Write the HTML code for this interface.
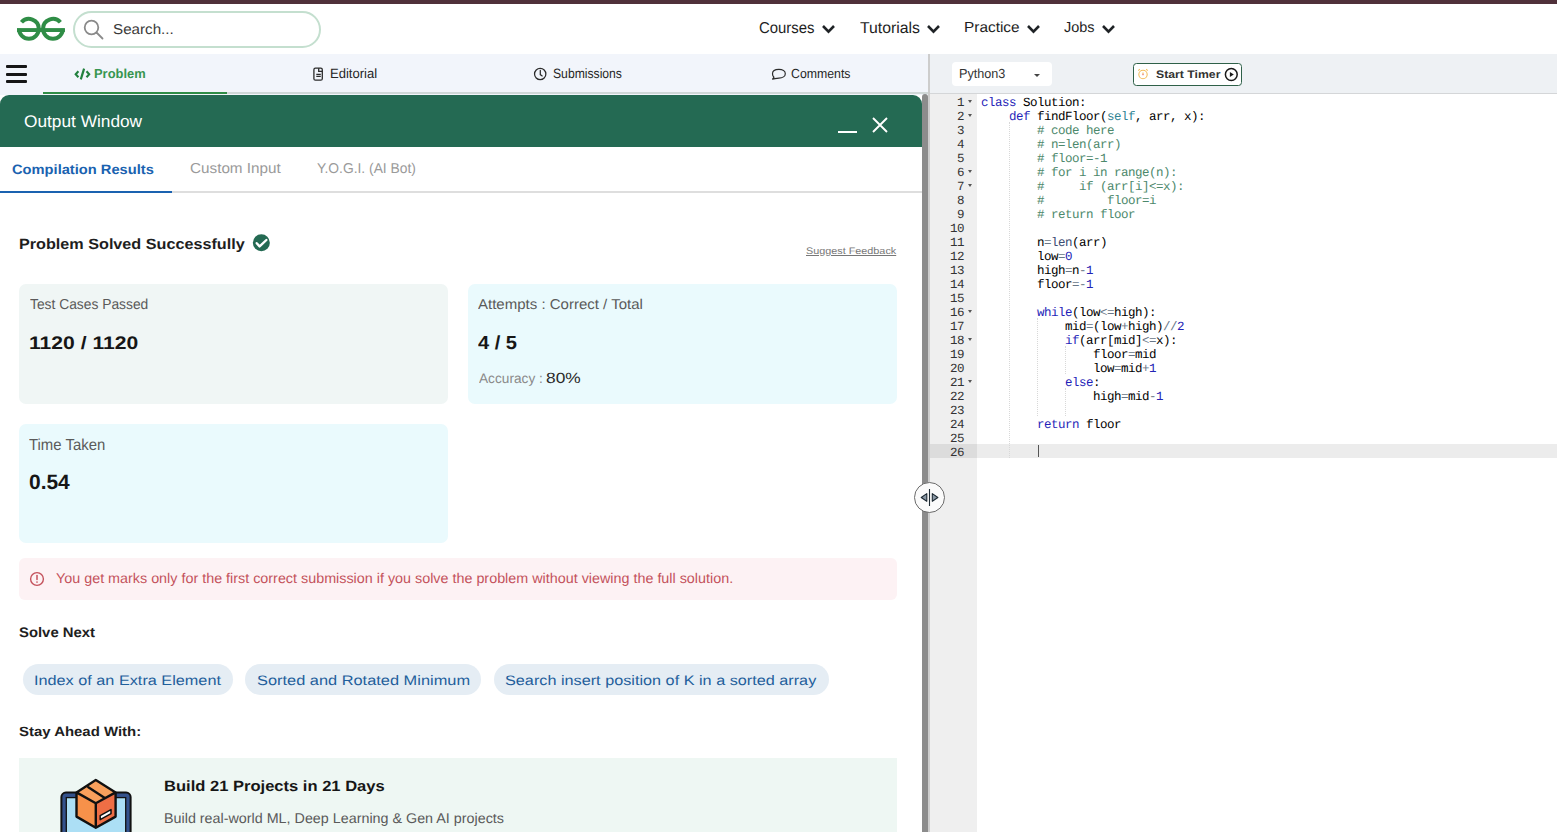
<!DOCTYPE html>
<html><head><meta charset="utf-8"><title>GfG Practice</title>
<style>
html,body{margin:0;padding:0}
body{width:1557px;height:832px;overflow:hidden;position:relative;background:#fff;font-family:"Liberation Sans",sans-serif;text-rendering:geometricPrecision}
.a{position:absolute}
.t{position:absolute;white-space:pre;font-family:"Liberation Sans",sans-serif}
.ln{position:absolute;left:930px;width:34px;text-align:right;font-family:"Liberation Mono",monospace;font-size:12.5px;line-height:14px;letter-spacing:-0.5012px;color:#333;white-space:pre}
.cl{position:absolute;left:981px;font-family:"Liberation Mono",monospace;font-size:12.5px;line-height:14px;letter-spacing:-0.5012px;color:#000;white-space:pre}
.fw{position:absolute;left:968.2px;width:0;height:0;border-left:2.7px solid transparent;border-right:2.7px solid transparent;border-top:3.3px solid #555}
.k{color:#1f1fb8}.c{color:#4c886b}.s{color:#318495}.f{color:#3c4c72}.o{color:#687687}.n{color:#2323b5}
</style></head><body>
<!-- top stripe -->
<div class="a" style="left:0;top:0;width:1557px;height:4px;background:#50313a"></div>
<!-- logo -->
<svg class="a" style="left:0;top:0" width="80" height="50" viewBox="0 0 80 50">
 <g fill="none" stroke="#2f8d46" stroke-width="4.05">
  <path d="M21.47 22.28 A9.92 9.92 0 0 1 38.82 28.85 A9.92 9.92 0 0 1 28.9 38.77 A9.92 9.92 0 0 1 18.98 28.85"/>
  <path d="M60.38 22.28 A9.92 9.92 0 0 0 43.03 28.85 A9.92 9.92 0 0 0 52.95 38.77 A9.92 9.92 0 0 0 62.87 28.85"/>
 </g>
 <rect x="17" y="28.1" width="47.9" height="3.9" fill="#2f8d46"/>
</svg>
<!-- search -->
<div class="a" style="left:73px;top:11px;width:244px;height:33px;border:2px solid #c4dfcf;border-radius:20px"></div>
<svg class="a" style="left:82px;top:18px" width="24" height="24" viewBox="0 0 24 24">
 <circle cx="9.5" cy="9.5" r="6.8" fill="none" stroke="#8a8a8a" stroke-width="1.8"/>
 <path d="M14.5 14.5 L20.5 20.5" stroke="#8a8a8a" stroke-width="1.8" stroke-linecap="round"/>
</svg>
<!-- nav chevrons -->
<svg class="a" style="left:820.95px;top:23px" width="16" height="12" viewBox="0 0 16 12"><path d="M2 3 L7.5 8.6 L13 3" fill="none" stroke="#1f2326" stroke-width="2.6"/></svg>
<svg class="a" style="left:925.9px;top:23px" width="16" height="12" viewBox="0 0 16 12"><path d="M2 3 L7.5 8.6 L13 3" fill="none" stroke="#1f2326" stroke-width="2.6"/></svg>
<svg class="a" style="left:1025.95px;top:23px" width="16" height="12" viewBox="0 0 16 12"><path d="M2 3 L7.5 8.6 L13 3" fill="none" stroke="#1f2326" stroke-width="2.6"/></svg>
<svg class="a" style="left:1101.05px;top:23px" width="16" height="12" viewBox="0 0 16 12"><path d="M2 3 L7.5 8.6 L13 3" fill="none" stroke="#1f2326" stroke-width="2.6"/></svg>

<!-- left sub nav -->
<div class="a" style="left:0;top:54px;width:928px;height:41px;background:#f2f5fb"></div>
<div class="a" style="left:43px;top:92px;width:885px;height:2px;background:#d0d8d8"></div>
<div class="a" style="left:43px;top:92px;width:184px;height:2px;background:#2f8d46"></div>
<!-- hamburger -->
<div class="a" style="left:6px;top:65px;width:21px;height:3px;background:#161616;border-radius:1px"></div>
<div class="a" style="left:6px;top:72.5px;width:21px;height:3px;background:#161616;border-radius:1px"></div>
<div class="a" style="left:6px;top:80px;width:21px;height:3px;background:#161616;border-radius:1px"></div>
<!-- tab icons -->
<svg class="a" style="left:0;top:54px" width="928" height="40" viewBox="0 54 928 40">
 <path d="M78.4 71.2 L75.7 74.2 L78.4 77.2 M86.5 71.2 L89.2 74.2 L86.5 77.2" fill="none" stroke="#22803e" stroke-width="2.1"/>
 <path d="M84.1 68.6 L80.8 79.4" fill="none" stroke="#22803e" stroke-width="2.2"/>
 <rect x="313.9" y="68.2" width="8.4" height="12" rx="1.5" fill="none" stroke="#2b2b2b" stroke-width="1.3"/>
 <path d="M318.7 68.2 V71.3 H322.3" fill="none" stroke="#2b2b2b" stroke-width="1.3"/>
 <path d="M316.3 74.4 H320.8 M316.3 76.4 H320.8" stroke="#2b2b2b" stroke-width="1.1"/>
 <circle cx="540.2" cy="74" r="5.65" fill="none" stroke="#2b2b2b" stroke-width="1.25"/>
 <path d="M540.3 70.4 V74.6 L542.2 75.9" fill="none" stroke="#2b2b2b" stroke-width="1.25" stroke-linecap="round"/>
 <path d="M774 77.2 C772.6 76.3 772.5 75 772.5 73.7 C772.5 71 775.3 69.4 778.9 69.4 C782.5 69.4 785.3 71.1 785.3 73.7 C785.3 76.3 782.5 78.1 778.9 78.1 C777.5 78.1 776.2 78.3 775 78.6 L772.6 79.2 Z" fill="none" stroke="#2b2b2b" stroke-width="1.2" stroke-linejoin="round"/>
</svg>
<!-- right header -->
<div class="a" style="left:928px;top:54px;width:629px;height:40px;background:#eef1f4"></div>
<div class="a" style="left:930px;top:93px;width:627px;height:1px;background:#d4d6d8"></div>
<div class="a" style="left:928px;top:54px;width:2px;height:778px;background:#cdcdcd"></div>
<!-- python select -->
<div class="a" style="left:952px;top:62px;width:100px;height:24px;background:#fff;border-radius:4px"></div>
<div class="a" style="left:1034px;top:74px;width:0;height:0;border-left:3.5px solid transparent;border-right:3.5px solid transparent;border-top:3.5px solid #444"></div>
<!-- start timer -->
<div class="a" style="left:1133px;top:63px;width:107px;height:21px;background:#fff;border:1px solid #2f6149;border-radius:3.5px"></div>
<svg class="a" style="left:1137px;top:68px" width="12" height="12" viewBox="0 0 12 12">
 <circle cx="6" cy="6.5" r="4.2" fill="none" stroke="#f3bd5c" stroke-width="1.1"/>
 <path d="M1.3 2.6 L2.8 1.2 M10.7 2.6 L9.2 1.2 M6 4.5 V6.8" stroke="#f3bd5c" stroke-width="1.1"/>
 <circle cx="6" cy="6.6" r="0.8" fill="#f08a8a"/>
</svg>
<svg class="a" style="left:1224px;top:67px" width="15" height="15" viewBox="0 0 15 15">
 <circle cx="7.3" cy="7.5" r="5.9" fill="none" stroke="#1a1a1a" stroke-width="1.5"/>
 <path d="M5.9 4.9 L9.8 7.5 L5.9 10.1 Z" fill="#1a1a1a"/>
</svg>

<!-- editor -->
<div class="a" style="left:930px;top:94px;width:47px;height:738px;background:#efefef"></div>
<div style="position:absolute;left:977px;top:444px;width:580px;height:14px;background:#ececec"></div>
<div style="position:absolute;left:930px;top:444px;width:47px;height:14px;background:#dcdcdc"></div>
<div style="position:absolute;left:1008.5px;top:122px;width:0;height:336px;border-left:1px dotted #d8d8d8"></div>
<div style="position:absolute;left:1036.5px;top:318px;width:0;height:98px;border-left:1px dotted #d8d8d8"></div>
<div style="position:absolute;left:1064.5px;top:346px;width:0;height:28px;border-left:1px dotted #d8d8d8"></div>
<div style="position:absolute;left:1064.5px;top:388px;width:0;height:28px;border-left:1px dotted #d8d8d8"></div>
<div class="ln" style="top:96px">1</div>
<div class="fw" style="top:100px"></div>
<div class="cl" style="top:96px"><span class="k">class</span> Solution:</div>
<div class="ln" style="top:110px">2</div>
<div class="fw" style="top:114px"></div>
<div class="cl" style="top:110px">    <span class="k">def</span> findFloor(<span class="s">self</span>, arr, x):</div>
<div class="ln" style="top:124px">3</div>
<div class="cl" style="top:124px">        <span class="c"># code here</span></div>
<div class="ln" style="top:138px">4</div>
<div class="cl" style="top:138px">        <span class="c"># n=len(arr)</span></div>
<div class="ln" style="top:152px">5</div>
<div class="cl" style="top:152px">        <span class="c"># floor=-1</span></div>
<div class="ln" style="top:166px">6</div>
<div class="fw" style="top:170px"></div>
<div class="cl" style="top:166px">        <span class="c"># for i in range(n):</span></div>
<div class="ln" style="top:180px">7</div>
<div class="fw" style="top:184px"></div>
<div class="cl" style="top:180px">        <span class="c">#     if (arr[i]&lt;=x):</span></div>
<div class="ln" style="top:194px">8</div>
<div class="cl" style="top:194px">        <span class="c">#         floor=i</span></div>
<div class="ln" style="top:208px">9</div>
<div class="cl" style="top:208px">        <span class="c"># return floor</span></div>
<div class="ln" style="top:222px">10</div>
<div class="cl" style="top:222px"></div>
<div class="ln" style="top:236px">11</div>
<div class="cl" style="top:236px">        n<span class="o">=</span><span class="f">len</span>(arr)</div>
<div class="ln" style="top:250px">12</div>
<div class="cl" style="top:250px">        low<span class="o">=</span><span class="n">0</span></div>
<div class="ln" style="top:264px">13</div>
<div class="cl" style="top:264px">        high<span class="o">=</span>n<span class="o">-</span><span class="n">1</span></div>
<div class="ln" style="top:278px">14</div>
<div class="cl" style="top:278px">        floor<span class="o">=-</span><span class="n">1</span></div>
<div class="ln" style="top:292px">15</div>
<div class="cl" style="top:292px"></div>
<div class="ln" style="top:306px">16</div>
<div class="fw" style="top:310px"></div>
<div class="cl" style="top:306px">        <span class="k">while</span>(low<span class="o">&lt;=</span>high):</div>
<div class="ln" style="top:320px">17</div>
<div class="cl" style="top:320px">            mid<span class="o">=</span>(low<span class="o">+</span>high)<span class="o">//</span><span class="n">2</span></div>
<div class="ln" style="top:334px">18</div>
<div class="fw" style="top:338px"></div>
<div class="cl" style="top:334px">            <span class="k">if</span>(arr[mid]<span class="o">&lt;=</span>x):</div>
<div class="ln" style="top:348px">19</div>
<div class="cl" style="top:348px">                floor<span class="o">=</span>mid</div>
<div class="ln" style="top:362px">20</div>
<div class="cl" style="top:362px">                low<span class="o">=</span>mid<span class="o">+</span><span class="n">1</span></div>
<div class="ln" style="top:376px">21</div>
<div class="fw" style="top:380px"></div>
<div class="cl" style="top:376px">            <span class="k">else</span>:</div>
<div class="ln" style="top:390px">22</div>
<div class="cl" style="top:390px">                high<span class="o">=</span>mid<span class="o">-</span><span class="n">1</span></div>
<div class="ln" style="top:404px">23</div>
<div class="cl" style="top:404px"></div>
<div class="ln" style="top:418px">24</div>
<div class="cl" style="top:418px">        <span class="k">return</span> floor</div>
<div class="ln" style="top:432px">25</div>
<div class="cl" style="top:432px"></div>
<div class="ln" style="top:446px">26</div>
<div class="cl" style="top:446px"></div>
<div style="position:absolute;left:1038px;top:445px;width:1px;height:12px;background:#555"></div>

<!-- output window -->
<div class="a" style="left:0;top:95px;width:922px;height:737px;background:#fff;border-radius:9px 9px 0 0;overflow:hidden">
 <div class="a" style="left:0;top:0;width:922px;height:52px;background:#246a53"></div>
</div>
<!-- minimize / close -->
<div class="a" style="left:838px;top:131px;width:19px;height:2px;background:#fff"></div>
<svg class="a" style="left:871px;top:116px" width="18" height="18" viewBox="0 0 18 18"><path d="M2 2 L16 16 M16 2 L2 16" stroke="#fff" stroke-width="1.9"/></svg>
<!-- scrollbar -->
<div class="a" style="left:922px;top:94px;width:6px;height:738px;background:#8c8c8c;border-radius:3px 3px 0 0"></div>
<!-- tabs underline -->
<div class="a" style="left:0;top:191px;width:922px;height:2px;background:#dedede"></div>
<div class="a" style="left:0;top:191px;width:172px;height:2px;background:#1a62b0"></div>
<!-- success check -->
<svg class="a" style="left:252px;top:234.4px" width="18" height="18" viewBox="0 0 18 18">
 <circle cx="9.35" cy="8.75" r="8.5" fill="#246a53"/>
 <path d="M4.7 9.2 L7.6 12.4 L14.4 6" fill="none" stroke="#fff" stroke-width="2.4" stroke-linecap="round" stroke-linejoin="round"/>
</svg>
<!-- cards -->
<div class="a" style="left:19px;top:284px;width:429px;height:120px;background:#f0f6f5;border-radius:7px"></div>
<div class="a" style="left:468px;top:284px;width:429px;height:120px;background:#eafafd;border-radius:7px"></div>
<div class="a" style="left:19px;top:424px;width:429px;height:119px;background:#eafafd;border-radius:7px"></div>
<!-- alert -->
<div class="a" style="left:19px;top:558px;width:878px;height:42px;background:#fdf2f4;border-radius:6px"></div>
<svg class="a" style="left:29px;top:571px" width="16" height="16" viewBox="0 0 16 16">
 <circle cx="8" cy="8" r="6.4" fill="none" stroke="#c4525c" stroke-width="1.4"/>
 <path d="M8 4.6 V8.6" stroke="#c4525c" stroke-width="1.5" stroke-linecap="round"/>
 <circle cx="8" cy="11" r="0.85" fill="#c4525c"/>
</svg>
<!-- chips -->
<div class="a" style="left:23px;top:664px;width:210px;height:31px;background:#e5edf4;border-radius:16px"></div>
<div class="a" style="left:245px;top:664px;width:236px;height:31px;background:#e5edf4;border-radius:16px"></div>
<div class="a" style="left:494px;top:664px;width:335px;height:31px;background:#e5edf4;border-radius:16px"></div>
<!-- bottom card -->
<div class="a" style="left:19px;top:758px;width:878px;height:74px;background:#eef7f3"></div>
<svg class="a" style="left:50px;top:770px" width="95" height="62" viewBox="0 0 95 62">
 <rect x="11.4" y="22.6" width="69.2" height="60" rx="4.5" fill="#34528c" stroke="#111" stroke-width="2"/>
 <rect x="16.3" y="27.6" width="59.4" height="50" fill="#acdff5" stroke="#111" stroke-width="1.3"/>
 <path d="M26.5 22.4 L45.8 10 L65.6 22.4 L45.8 33.2 Z" fill="#f9a05c"/>
 <path d="M26.5 22.4 L45.8 33.2 L45.8 57.7 L26.5 46.6 Z" fill="#f7914a"/>
 <path d="M45.8 33.2 L65.6 22.4 L65.6 46.6 L45.8 57.7 Z" fill="#ee6e45"/>
 <path d="M26.5 22.4 L45.8 10 L65.6 22.4 L65.6 46.6 L45.8 57.7 L26.5 46.6 Z M26.5 22.4 L45.8 33.2 L65.6 22.4 M45.8 33.2 V57.7 M37.6 16.8 L54.8 28" fill="none" stroke="#111" stroke-width="2.4" stroke-linejoin="round"/>
 <path d="M50.2 45.6 L61 39.6 L61 43.6 L50.2 49.6 Z" fill="#fff" stroke="#111" stroke-width="1.5" stroke-linejoin="round"/>
</svg>
<!-- resizer -->
<div class="a" style="left:914px;top:482px;width:29px;height:29px;border:1px solid #6b6b6b;border-radius:50%;background:#fbfbfb"></div>
<svg class="a" style="left:918px;top:486px" width="23" height="23" viewBox="0 0 23 23">
 <path d="M11.5 3 V20" stroke="#1e2a33" stroke-width="1.1"/>
 <path d="M8.8 7.6 L3.2 11.5 L8.8 15.3 Z" fill="#8a98a5" stroke="#1e2a33" stroke-width="1.1" stroke-linejoin="round"/>
 <path d="M14.3 7.6 L19.9 11.5 L14.3 15.3 Z" fill="#8a98a5" stroke="#1e2a33" stroke-width="1.1" stroke-linejoin="round"/>
</svg>
<div class="t" style="left:112.86px;top:21.00px;font-size:14.25px;line-height:18px;font-weight:400;color:#3a3a3a;transform:scaleX(1.0658);transform-origin:0 0;">Search...</div>
<div class="t" style="left:759.14px;top:19.00px;font-size:15.75px;line-height:20px;font-weight:400;color:#1e1e1e;transform:scaleX(0.9465);transform-origin:0 0;">Courses</div>
<div class="t" style="left:859.70px;top:19.00px;font-size:15.75px;line-height:20px;font-weight:400;color:#1e1e1e;transform:scaleX(1.0028);transform-origin:0 0;">Tutorials</div>
<div class="t" style="left:964.34px;top:19.00px;font-size:14.625px;line-height:19px;font-weight:400;color:#1e1e1e;transform:scaleX(1.0530);transform-origin:0 0;">Practice</div>
<div class="t" style="left:1064.30px;top:19.00px;font-size:14.625px;line-height:19px;font-weight:400;color:#1e1e1e;transform:scaleX(0.9907);transform-origin:0 0;">Jobs</div>
<div class="t" style="left:94.01px;top:65.00px;font-size:13.0px;line-height:17px;font-weight:700;color:#379650;transform:scaleX(0.9930);transform-origin:0 0;">Problem</div>
<div class="t" style="left:329.74px;top:65.00px;font-size:13.5px;line-height:17px;font-weight:400;color:#262626;transform:scaleX(0.9664);transform-origin:0 0;">Editorial</div>
<div class="t" style="left:552.56px;top:65.00px;font-size:13.5px;line-height:17px;font-weight:400;color:#262626;transform:scaleX(0.9009);transform-origin:0 0;">Submissions</div>
<div class="t" style="left:790.84px;top:65.00px;font-size:13.125px;line-height:17px;font-weight:400;color:#262626;transform:scaleX(0.9393);transform-origin:0 0;">Comments</div>
<div class="t" style="left:23.68px;top:111.00px;font-size:16.875px;line-height:22px;font-weight:400;color:#ffffff;transform:scaleX(1.0246);transform-origin:0 0;">Output Window</div>
<div class="t" style="left:12.26px;top:161.00px;font-size:13.625px;line-height:18px;font-weight:700;color:#1a62b0;transform:scaleX(1.0777);transform-origin:0 0;">Compilation Results</div>
<div class="t" style="left:190.26px;top:160.00px;font-size:14.5px;line-height:19px;font-weight:400;color:#9a9a9a;transform:scaleX(1.0525);transform-origin:0 0;">Custom Input</div>
<div class="t" style="left:317.31px;top:160.00px;font-size:14.25px;line-height:18px;font-weight:400;color:#9a9a9a;transform:scaleX(0.9707);transform-origin:0 0;">Y.O.G.I. (AI Bot)</div>
<div class="t" style="left:18.92px;top:236.00px;font-size:14.875px;line-height:19px;font-weight:700;color:#1e1e1e;transform:scaleX(1.0885);transform-origin:0 0;">Problem Solved Successfully</div>
<div class="t" style="left:806.14px;top:246.00px;font-size:9.5px;line-height:12px;font-weight:400;color:#777777;transform:scaleX(1.1386);transform-origin:0 0;text-decoration:underline;">Suggest Feedback</div>
<div class="t" style="left:29.71px;top:296.00px;font-size:14.5px;line-height:19px;font-weight:400;color:#5a5a5a;transform:scaleX(0.9532);transform-origin:0 0;">Test Cases Passed</div>
<div class="t" style="left:28.92px;top:332.00px;font-size:18.125px;line-height:23px;font-weight:700;color:#161616;transform:scaleX(1.1656);transform-origin:0 0;">1120 / 1120</div>
<div class="t" style="left:478.20px;top:296.00px;font-size:14.25px;line-height:18px;font-weight:400;color:#5a5a5a;transform:scaleX(1.0530);transform-origin:0 0;">Attempts : Correct / Total</div>
<div class="t" style="left:477.99px;top:331.00px;font-size:18.875px;line-height:24px;font-weight:700;color:#161616;transform:scaleX(1.0630);transform-origin:0 0;">4 / 5</div>
<div class="t" style="left:478.50px;top:370.00px;font-size:13.75px;line-height:18px;font-weight:400;color:#8a8a8a;transform:scaleX(0.9942);transform-origin:0 0;">Accuracy :</div>
<div class="t" style="left:545.90px;top:370.00px;font-size:14.875px;line-height:19px;font-weight:400;color:#2a2a2a;transform:scaleX(1.1660);transform-origin:0 0;">80%</div>
<div class="t" style="left:29.42px;top:436.00px;font-size:15.875px;line-height:20px;font-weight:400;color:#5a5a5a;transform:scaleX(0.9397);transform-origin:0 0;">Time Taken</div>
<div class="t" style="left:28.89px;top:470.00px;font-size:20.75px;line-height:26px;font-weight:700;color:#161616;transform:scaleX(1.0090);transform-origin:0 0;">0.54</div>
<div class="t" style="left:55.50px;top:569.00px;font-size:14.125px;line-height:18px;font-weight:400;color:#c4525c;transform:scaleX(1.0166);transform-origin:0 0;">You get marks only for the first correct submission if you solve the problem without viewing the full solution.</div>
<div class="t" style="left:19.17px;top:623.00px;font-size:13.875px;line-height:18px;font-weight:700;color:#1e1e1e;transform:scaleX(1.0720);transform-origin:0 0;">Solve Next</div>
<div class="t" style="left:33.98px;top:672.00px;font-size:13.75px;line-height:18px;font-weight:400;color:#1f5f9c;transform:scaleX(1.1816);transform-origin:0 0;">Index of an Extra Element</div>
<div class="t" style="left:257.19px;top:672.00px;font-size:13.75px;line-height:18px;font-weight:400;color:#1f5f9c;transform:scaleX(1.1912);transform-origin:0 0;">Sorted and Rotated Minimum</div>
<div class="t" style="left:505.29px;top:672.00px;font-size:13.75px;line-height:18px;font-weight:400;color:#1f5f9c;transform:scaleX(1.1805);transform-origin:0 0;">Search insert position of K in a sorted array</div>
<div class="t" style="left:18.96px;top:723.00px;font-size:13.375px;line-height:17px;font-weight:700;color:#1e1e1e;transform:scaleX(1.1181);transform-origin:0 0;">Stay Ahead With:</div>
<div class="t" style="left:163.70px;top:778.00px;font-size:14.875px;line-height:19px;font-weight:700;color:#161616;transform:scaleX(1.1135);transform-origin:0 0;">Build 21 Projects in 21 Days</div>
<div class="t" style="left:163.58px;top:809.00px;font-size:14.125px;line-height:18px;font-weight:400;color:#5a5a5a;transform:scaleX(1.0151);transform-origin:0 0;">Build real-world ML, Deep Learning &amp; Gen AI projects</div>
<div class="t" style="left:958.85px;top:65.00px;font-size:13.25px;line-height:17px;font-weight:400;color:#333333;transform:scaleX(0.9543);transform-origin:0 0;">Python3</div>
<div class="t" style="left:1156.07px;top:68.00px;font-size:11.0px;line-height:14px;font-weight:700;color:#333333;transform:scaleX(1.1132);transform-origin:0 0;">Start Timer</div>
</body></html>
